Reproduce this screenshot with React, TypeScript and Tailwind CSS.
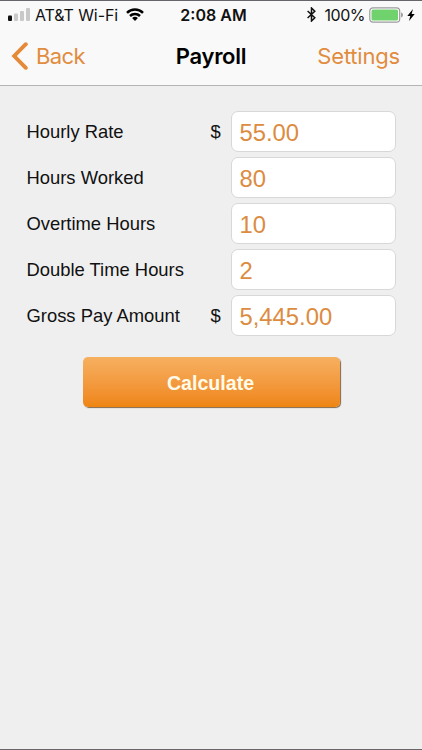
const fields = [
  { label: 'Hourly Rate', currency: true, value: '55.00' },
  { label: 'Hours Worked', currency: false, value: '80' },
  { label: 'Overtime Hours', currency: false, value: '10' },
  { label: 'Double Time Hours', currency: false, value: '2' },
  { label: 'Gross Pay Amount', currency: true, value: '5,445.00' },
];

function StatusBar() {
  return (
    <div className="grid h-[27px] grid-cols-[1fr_auto_1fr] items-center text-[16px] leading-[26px] text-[#111]">
      <div className="flex items-center pl-2">
        <svg width="22" height="13" viewBox="0 0 22 13" className="mr-[5px] shrink-0">
          <rect x="0" y="7.5" width="4" height="5.5" rx="1" fill="#111" />
          <rect x="6" y="5.5" width="4" height="7.5" rx="1" fill="#c9c9c9" />
          <rect x="12" y="3" width="4" height="10" rx="1" fill="#c9c9c9" />
          <rect x="18" y="0" width="4" height="13" rx="1" fill="#c9c9c9" />
        </svg>
        <span className="whitespace-nowrap tracking-[-0.1px]">AT&amp;T Wi-Fi</span>
        <svg width="18" height="13" viewBox="0 0 18 13" className="ml-2 shrink-0" fill="none" stroke="#000" strokeWidth="2.5">
          <path d="M1 4.8a11.4 11.4 0 0 1 16 0" />
          <path d="M4 8a7.1 7.1 0 0 1 10 0" />
          <path d="M9 13L6.1 10.1a4.1 4.1 0 0 1 5.8 0z" fill="#000" stroke="none" />
        </svg>
      </div>
      <span className="whitespace-nowrap pl-[5px] font-semibold tracking-normal">2:08 AM</span>
      <div className="flex items-center justify-end pr-[7px]">
        <svg width="9" height="15" viewBox="0 0 9 15" className="mr-[9px] shrink-0" fill="none" stroke="#111" strokeWidth="1.5">
          <path d="M.6 4l7.2 6.7L4.5 14V1l3.3 3.2L.6 11" />
        </svg>
        <span className="tracking-[-0.5px]">100%</span>
        <svg width="36" height="16" viewBox="0 0 36 16" className="ml-1 shrink-0">
          <rect x=".8" y=".8" width="29.9" height="14.4" rx="3.2" fill="#fff" stroke="#9b9b9b" strokeWidth="1.2" />
          <rect x="2.5" y="2.5" width="26.5" height="11" rx="1.5" fill="#70d26d" />
          <path d="M32.2 5.6c2.2.6 2.2 4.2 0 4.8z" fill="#8d8d8d" />
        </svg>
        <svg width="8" height="12" viewBox="0 0 8 12" className="ml-0.5 shrink-0">
          <path d="M6 0L.3 7h3L2 12l5.7-7H4.6z" fill="#000" />
        </svg>
      </div>
    </div>
  );
}

export default function App() {
  return (
    <main className="flex h-[750px] w-[422px] flex-col overflow-hidden border-y border-[#66666a] bg-[#efefef] font-['Inter',sans-serif]">
      <header className="h-[85px] shrink-0 border-b border-[#b4b4b4] bg-[#f9f9f9]">
        <StatusBar />
        <nav className="grid h-[57px] grid-cols-[1fr_auto_1fr] items-center pb-[2px] text-[22px] leading-none text-[#e18c3e]">
          <button className="flex items-center gap-2 pl-[11px]">
            <svg width="17" height="28" viewBox="0 0 17 28" fill="none" stroke="#e48a39" strokeWidth="3.9" strokeLinecap="round" strokeLinejoin="miter">
              <path d="M14.8 2.2L3.2 14l11.6 11.8" />
            </svg>
            <span className="tracking-[-0.6px]">Back</span>
          </button>
          <h1 className="font-semibold tracking-[-0.3px] text-black">Payroll</h1>
          <button className="justify-self-end pr-[22px] tracking-[-0.2px]">Settings</button>
        </nav>
      </header>
      <form className="flex flex-col pl-[26.5px] pt-[25.4px] font-['Liberation_Sans',Arial,sans-serif]">
        <div className="flex flex-col gap-[5px]">
          {fields.map((field) => (
            <label key={field.label} className="flex h-[41px] items-center">
              <span className="w-[184px] whitespace-nowrap text-[18.4px] text-[#111]">{field.label}</span>
              <span className="w-5 text-[18.4px] text-[#111]">{field.currency ? '$' : ''}</span>
              <input
                readOnly
                defaultValue={field.value}
                className="h-[41px] w-[165px] rounded-[7px] border border-[#d8d8d8] bg-white px-2 pt-0.5 text-[23.8px] text-[#dc8c41] outline-none"
              />
            </label>
          ))}
        </div>
        <button
          type="button"
          className="ml-[56.5px] mt-[20.6px] h-[50px] w-[257px] rounded-[5px] bg-linear-to-b from-[#f6b05f] to-[#ef850f] pr-0.5 pt-1 text-[19.6px] font-bold text-[#fffbe9] shadow-[1px_1px_1px_#85674a]"
        >
          Calculate
        </button>
      </form>
    </main>
  );
}
